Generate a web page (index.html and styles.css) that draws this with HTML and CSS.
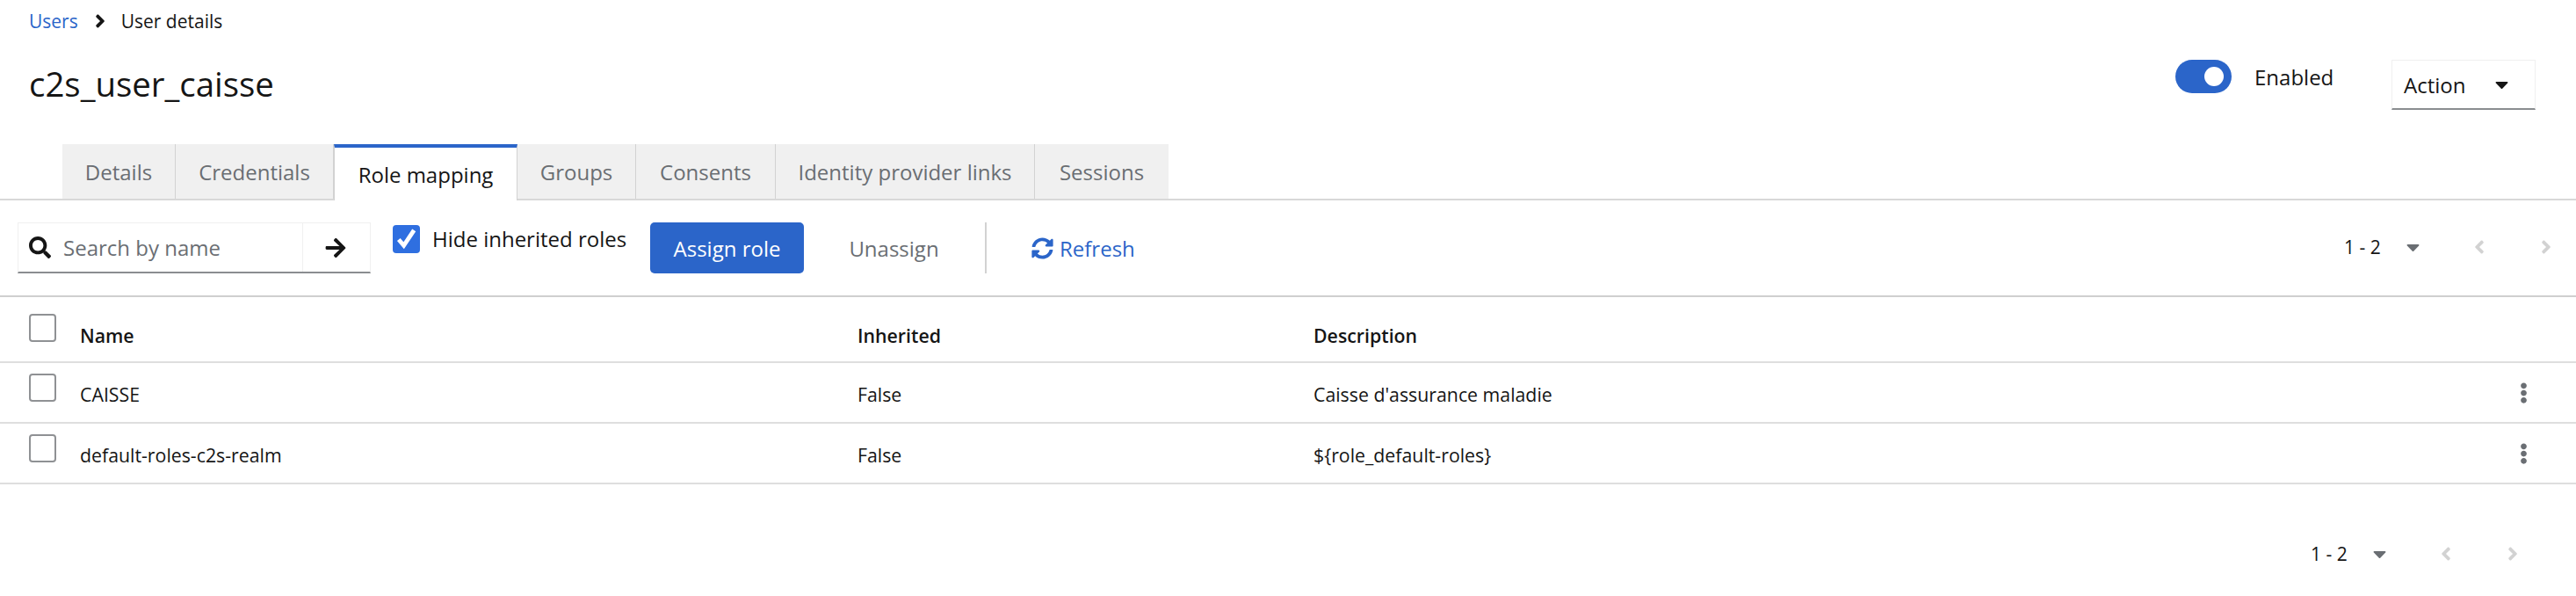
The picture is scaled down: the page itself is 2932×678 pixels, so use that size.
FILE: index.html
```html
<!DOCTYPE html>
<html lang="en">
<head>
	<meta charset="utf-8">
	<title>User details</title>
	<link rel="stylesheet" href="styles.css">
</head>
<body>
	<svg class="sprite">
		<symbol id="i-search" viewBox="0 0 512 512"><path d="M505 442.7L405.3 343c-4.5-4.5-10.6-7-17-7H372c27.6-35.3 44-79.7 44-128C416 93.1 322.9 0 208 0S0 93.1 0 208s93.1 208 208 208c48.3 0 92.7-16.4 128-44v16.3c0 6.4 2.5 12.5 7 17l99.7 99.7c9.4 9.4 24.6 9.4 33.9 0l28.3-28.3c9.4-9.4 9.4-24.6.1-34zM208 336c-70.7 0-128-57.2-128-128 0-70.7 57.2-128 128-128 70.7 0 128 57.2 128 128 0 70.7-57.2 128-128 128z"/></symbol>
		<symbol id="i-arrow" viewBox="0 0 448 512"><path d="M190.5 66.9l22.2-22.2c9.4-9.4 24.6-9.4 33.9 0L441 239c9.4 9.4 9.4 24.6 0 33.9L246.6 467.3c-9.4 9.4-24.6 9.4-33.9 0l-22.2-22.2c-9.5-9.5-9.3-25 .4-34.3L311.4 296H24c-13.3 0-24-10.7-24-24v-32c0-13.3 10.7-24 24-24h287.4L190.9 101.2c-9.8-9.3-10-24.8-.4-34.3z"/></symbol>
		<symbol id="i-sync" viewBox="0 0 512 512"><path d="M370.72 133.28C339.458 104.008 298.888 87.962 255.848 88c-77.458.068-144.328 53.178-162.791 126.85-1.344 5.363-6.122 9.15-11.651 9.15H24.103c-7.498 0-13.194-6.807-11.807-14.176C33.933 94.924 134.813 8 256 8c66.448 0 126.791 26.136 171.315 68.685L463.03 40.97C478.149 25.851 504 36.559 504 57.941V192c0 13.255-10.745 24-24 24H345.941c-21.382 0-32.09-25.851-16.971-40.971l41.75-41.749zM32 296h134.059c21.382 0 32.09 25.851 16.971 40.971l-41.75 41.75c31.262 29.273 71.835 45.319 114.876 45.28 77.418-.07 144.315-53.144 162.787-126.849 1.344-5.363 6.122-9.15 11.651-9.15h57.304c7.498 0 13.194 6.807 11.807 14.176C478.067 417.076 377.187 504 256 504c-66.448 0-126.791-26.136-171.315-68.685L48.97 471.03C33.851 486.149 8 475.441 8 454.059V320c0-13.255 10.745-24 24-24z"/></symbol>
		<symbol id="i-right" viewBox="0 0 256 512"><path d="M224.3 273l-136 136c-9.4 9.4-24.6 9.4-33.9 0l-22.6-22.6c-9.4-9.4-9.4-24.6 0-33.9l96.4-96.4-96.4-96.4c-9.4-9.4-9.4-24.6 0-33.9L54.3 103c9.4-9.4 24.6-9.4 33.9 0l136 136c9.5 9.4 9.5 24.6.1 34z"/></symbol>
		<symbol id="i-left" viewBox="0 0 256 512"><path d="M31.7 239l136-136c9.4-9.4 24.6-9.4 33.9 0l22.6 22.6c9.4 9.4 9.4 24.6 0 33.9L127.9 256l96.4 96.4c9.4 9.4 9.4 24.6 0 33.9L201.7 409c-9.4 9.4-24.6 9.4-33.9 0l-136-136c-9.5-9.4-9.5-24.6-.1-34z"/></symbol>
		<symbol id="i-caret" viewBox="0 0 320 512"><path d="M31.3 192h257.3c17.8 0 26.7 21.5 14.1 34.1L174.1 354.8c-7.8 7.8-20.5 7.8-28.3 0L17.2 226.1C4.6 213.5 13.5 192 31.3 192z"/></symbol>
		<symbol id="i-kebab" viewBox="0 0 192 512"><path d="M96 184c39.8 0 72 32.2 72 72s-32.2 72-72 72-72-32.2-72-72 32.2-72 72-72zM24 80c0 39.8 32.2 72 72 72s72-32.2 72-72S135.8 8 96 8 24 40.2 24 80zm0 352c0 39.8 32.2 72 72 72s72-32.2 72-72-32.2-72-72-72-72 32.2-72 72z"/></symbol>
	</svg>

	<nav class="breadcrumb">
		<a class="link">Users</a>
		<svg class="ico-angle"><use href="#i-right"/></svg>
		<span>User details</span>
	</nav>

	<header class="page-head">
		<h1 class="title">c2s_user_caisse</h1>
		<div class="switch">
			<span class="switch-track"><span class="switch-knob"></span></span>
			<span class="switch-label">Enabled</span>
		</div>
		<div class="action-select">
			<span>Action</span>
			<svg class="ico-caret"><use href="#i-caret"/></svg>
		</div>
	</header>

	<div class="tabs">
		<div class="tab">Details</div>
		<div class="tab">Credentials</div>
		<div class="tab active">Role mapping</div>
		<div class="tab">Groups</div>
		<div class="tab">Consents</div>
		<div class="tab">Identity provider links</div>
		<div class="tab">Sessions</div>
	</div>

	<div class="toolbar">
		<div class="search">
			<div class="search-field">
				<svg class="ico-search"><use href="#i-search"/></svg>
				<span class="placeholder">Search by name</span>
			</div>
			<div class="search-go"><svg class="ico-arrow"><use href="#i-arrow"/></svg></div>
		</div>
		<label class="hide-roles">
			<span class="check checked">
				<svg viewBox="0 0 32 32"><path d="M7 17l6 7L25 6" fill="none" stroke="#fff" stroke-width="5"/></svg>
			</span>
			<span>Hide inherited roles</span>
		</label>
		<button class="btn-primary">Assign role</button>
		<button class="btn-plain">Unassign</button>
		<div class="tool-sep"></div>
		<a class="refresh"><svg class="ico-sync"><use href="#i-sync"/></svg>Refresh</a>
		<div class="pager pager-top">
			<span class="pager-count">1 - 2</span>
			<svg class="ico-caret muted"><use href="#i-caret"/></svg>
			<svg class="ico-angle off"><use href="#i-left"/></svg>
			<svg class="ico-angle off"><use href="#i-right"/></svg>
		</div>
	</div>

	<table class="roles">
		<thead>
			<tr>
				<th class="col-check"><span class="check"></span></th>
				<th class="col-name">Name</th>
				<th class="col-inherited">Inherited</th>
				<th>Description</th>
				<th class="col-kebab"></th>
			</tr>
		</thead>
		<tbody>
			<tr>
				<td class="col-check"><span class="check"></span></td>
				<td>CAISSE</td>
				<td>False</td>
				<td>Caisse d'assurance maladie</td>
				<td class="col-kebab"><svg class="ico-kebab"><use href="#i-kebab"/></svg></td>
			</tr>
			<tr>
				<td class="col-check"><span class="check"></span></td>
				<td>default-roles-c2s-realm</td>
				<td>False</td>
				<td>${role_default-roles}</td>
				<td class="col-kebab"><svg class="ico-kebab"><use href="#i-kebab"/></svg></td>
			</tr>
		</tbody>
	</table>

	<div class="pager pager-bottom">
		<span class="pager-count">1 - 2</span>
		<svg class="ico-caret muted"><use href="#i-caret"/></svg>
		<svg class="ico-angle off"><use href="#i-left"/></svg>
		<svg class="ico-angle off"><use href="#i-right"/></svg>
	</div>
</body>
</html>
```

FILE: styles.css
```css
*{
	box-sizing: border-box;
}
body{
	margin: 0;
	background: #fff;
	color: #151515;
	font-family: "Open Sans", "Liberation Sans", sans-serif;
	font-size: 21px;
	overflow: hidden;
}
svg{
	fill: currentColor;
	display: block;
	flex: none;
}
.sprite{
	display: none;
}
.link{
	color: #2b65c9;
}

/* icons */
.ico-angle{
	width: 12px;
	height: 24px;
}
.ico-caret{
	width: 15px;
	height: 24px;
}
.ico-search{
	width: 25px;
	height: 25px;
}
.ico-arrow{
	width: 24px;
	height: 26px;
}
.ico-sync{
	width: 25px;
	height: 25px;
}
.ico-kebab{
	width: 9px;
	height: 26px;
	color: #6a6e73;
}
.muted{
	color: #6a6e73;
}
.off{
	color: #d2d2d2;
}

/* top */
.breadcrumb{
	height: 48px;
	padding-left: 33px;
	display: flex;
	align-items: center;
}
.breadcrumb .ico-angle{
	margin: 0 18px 0 19px;
}
.page-head{
	height: 116px;
	padding: 20px 46px 0 33px;
	display: flex;
	align-items: flex-start;
}
.title{
	margin: -1px auto 0 0;
	font-size: 38.4px;
	font-weight: 500;
	line-height: 57px;
}
.switch{
	display: flex;
	align-items: center;
	gap: 26px;
	height: 38px;
	margin-right: 64px;
	font-size: 24px;
}
.switch-label{
	width: 92px;
}
.switch-track{
	width: 64px;
	height: 38px;
	border-radius: 19px;
	background: #2b65c9;
	display: flex;
	align-items: center;
	justify-content: flex-end;
	padding-right: 9px;
}
.switch-knob{
	width: 22px;
	height: 22px;
	border-radius: 50%;
	background: #fff;
}
.action-select{
	width: 164px;
	height: 57px;
	border: 1px solid #f0f0f0;
	border-bottom: 2px solid #8a8d90;
	padding: 0 30px 0 13px;
	display: flex;
	align-items: center;
	justify-content: space-between;
	font-size: 24px;
}

/* tabs */
.tabs{
	height: 64px;
	padding-left: 71px;
	border-bottom: 2px solid #d8d8d8;
	display: grid;
	grid-template-columns: 129px 180px 209px 135px 159px 295px 152px;
	justify-content: start;
	font-size: 24px;
}
.tab{
	background: #f0f0f0;
	color: #6a6e73;
	border-right: 1px solid #d2d2d2;
	display: flex;
	align-items: center;
	justify-content: center;
}
.tab:last-child{
	border-right: 0;
}
.tab.active{
	background: #fff;
	color: #151515;
	border-top: 4px solid #2b65c9;
	border-left: 1px solid #d2d2d2;
	border-right: 1px solid #d2d2d2;
	margin-bottom: -2px;
}

/* toolbar */
.toolbar{
	height: 110px;
	padding: 25px 28px 0 20px;
	border-bottom: 2px solid #cfcfcf;
	display: flex;
	align-items: flex-start;
	font-size: 24px;
}
.search{
	width: 402px;
	height: 58px;
	border: 1px solid #f0f0f0;
	border-bottom: 2px solid #8a8d90;
	display: flex;
}
.search-field{
	width: 324px;
	padding-left: 12px;
	border-right: 1px solid #f0f0f0;
	display: flex;
	align-items: center;
	gap: 14px;
}
.placeholder{
	color: #6a6e73;
}
.search-go{
	flex: 1;
	display: flex;
	align-items: center;
	justify-content: center;
	padding-right: 2px;
}
.hide-roles{
	width: 293px;
	margin-left: 25px;
	padding-top: 3px;
	display: flex;
	gap: 14px;
	line-height: 32px;
}
.check{
	width: 31px;
	height: 32px;
	display: block;
	background: #fff;
	border: 2px solid #8f9194;
	border-radius: 4px;
}
.check.checked{
	background: #2f6fe0;
	border: 0;
}
button{
	font: inherit;
	height: 58px;
	border: 0;
	padding: 0;
}
.btn-primary{
	width: 175px;
	background: #2b65c9;
	color: #fff;
	border-radius: 5px;
}
.btn-plain{
	width: 205px;
	background: none;
	color: #6a6e73;
}
.tool-sep{
	width: 2px;
	height: 58px;
	margin-left: 1px;
	background: #d2d2d2;
}
.refresh{
	margin-left: 51px;
	height: 58px;
	display: flex;
	align-items: center;
	gap: 7px;
	color: #2b65c9;
}
.pager{
	display: flex;
	align-items: center;
	font-size: 21px;
	font-weight: 500;
}
.pager-top{
	margin-left: auto;
	height: 56px;
}
.pager-bottom{
	justify-content: flex-end;
	margin-top: 63px;
	padding-right: 66px;
	height: 32px;
}
.pager-count{
	width: 71px;
}
.pager .ico-caret{
	margin-right: 62px;
}
.pager .ico-angle + .ico-angle{
	margin-left: 64px;
}

/* table */
.roles{
	width: 100%;
	table-layout: fixed;
	border-collapse: separate;
	border-spacing: 0;
	font-size: 21.3px;
}
.roles th,
.roles td{
	text-align: left;
	vertical-align: top;
	padding: 20px 0 0;
	line-height: 32px;
	height: 69px;
	border-bottom: 2px solid #dedede;
}
.roles th{
	height: 75px;
	padding-top: 28px;
	font-weight: 600;
}
.col-check{
	width: 91px;
}
.roles .col-check{
	padding: 12px 0 0 33px;
}
.roles th.col-check{
	padding-top: 19px;
}
.col-name{
	width: 885px;
}
.col-inherited{
	width: 519px;
}
.col-kebab{
	width: 64px;
}
.roles .col-kebab{
	padding: 0;
	vertical-align: middle;
}
```
